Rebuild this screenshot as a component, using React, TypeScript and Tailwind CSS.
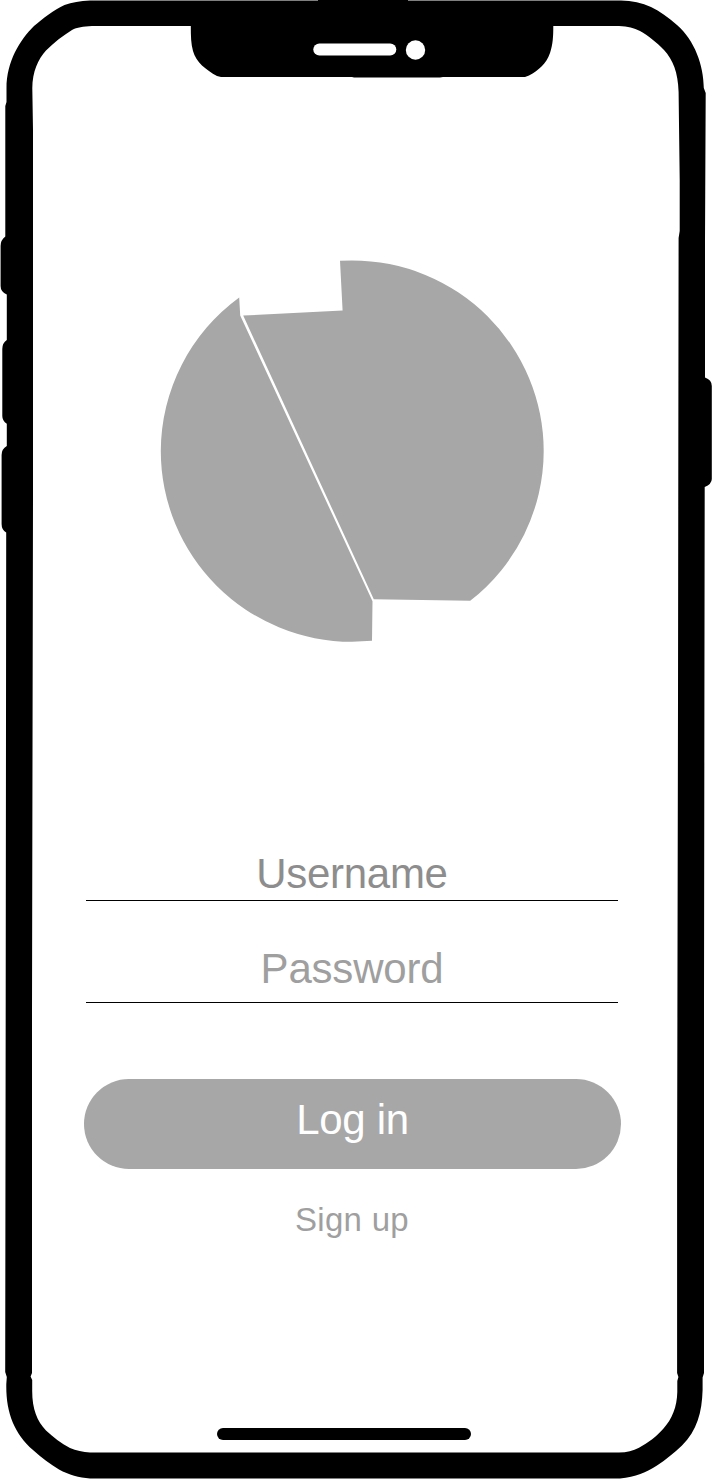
import React from "react";

function PhoneFrame() {
  return (
    <svg
      className="pointer-events-none absolute inset-0"
      width="712"
      height="1480"
      viewBox="0 0 712 1480"
      aria-hidden="true"
    >
      <path
        fillRule="evenodd"
        d="M90 .6C80 1 72 2.5 64.5 5C54 9.5 43 18.5 34 26C20 39.5 6.5 62 6.5 88V102L5.3 106V236.5Q.6 240 .6 246V286Q.6 292 6.8 294.5V340Q2.3 343 2.3 349V416Q2.3 421 6.8 423.8V446Q1.6 449 1.6 455V524Q1.6 530 6.2 532.6L5.7 1000L5.2 1372L6.8 1377L6.3 1384C5.8 1412 14 1433 33 1450C42 1458 50 1464 59 1469.5C69 1475 79 1477.5 90 1478.6H620C636 1477 646 1472.5 657 1465.5C666 1459.5 674 1453 682 1445.5C697 1431 702 1412 702.6 1390V1377.5L704 1373V1000L704.7 487Q711.8 484 711.8 479V386Q711.8 380 705 377.6V240L705.7 93L703.8 88C703.5 65 695 41 677 25C668 17 660 11.5 651 7C642 3 632 1 621 .6Z
        M92 26H190.8C190.8 36 191 44 193 51C196 62 206 70 217 76L221 77H352L354 77.6H440L443 77H525L529 75.5C539 70 546 64 550 53C553 44 553.3 36 553.3 26H619C628 26.5 634 28 640 31C648 35.5 657 42.5 664 50C673 60 678 72 678.6 92L679.7 180V231L678.6 238L678 700L677.1 1170V1373L678.4 1377L677.3 1381V1392C677 1407 672 1419 663.5 1428.5C657 1436 648 1443 639 1447.7C633 1451 627 1452.3 619 1452.6H90C83 1452 76 1450.5 70 1448C61 1443.5 53 1437 46 1430.5C37 1421 32 1409 32.2 1390V1380L30.6 1376.5L32 1373V1010L33 500V130L32.3 88C32.5 72 38 59 46 50.5C54 42.5 63 35.5 72 30C77 27.5 83 26.3 92 26Z"
      />
      <path d="M318 0H408V2H318Z" />
      <rect x="313.3" y="43.4" width="83" height="12.2" rx="6.1" fill="white" />
      <circle cx="415.5" cy="50" r="9.7" fill="white" />
      <rect x="217" y="1428" width="254" height="12" rx="6" />
    </svg>
  );
}

function Logo() {
  return (
    <svg className="ml-4" width="384" height="384" viewBox="160 259 384 384" role="img" aria-label="Logo">
      <g fill="#a7a7a7">
        <path d="M340 260.8L352 260.4A191.7 190.8 0 0 1 543.7 451.2A191.7 190.8 0 0 1 470.2 600.8L373.8 599.2L243.2 315.6L342.6 310.4Z" />
        <path d="M239.2 297.5A191.2 190.8 0 0 0 160.8 451A191.2 190.8 0 0 0 352 641.8L372 640.7L372.5 601.2L240.2 315.4Z" />
      </g>
    </svg>
  );
}

export default function App() {
  return (
    <main className="relative h-[1480px] w-[712px] overflow-hidden bg-white font-['Liberation_Sans',Arial,sans-serif]">
      <PhoneFrame />
      <div className="flex h-full flex-col pl-36 pt-[259px]">
        <Logo />
        <form
          className="-ml-[60px] mt-[206px] flex w-[537px] flex-col text-[42px] leading-[48px]"
          onSubmit={(event) => event.preventDefault()}
        >
          <input
            aria-label="Username"
            placeholder="Username"
            className="ml-0.5 h-[52px] w-[532px] border-b border-black bg-transparent pb-px text-center leading-[48px] tracking-[-0.3px] outline-none placeholder:text-[#8d8d8d]"
          />
          <input
            aria-label="Password"
            placeholder="Password"
            type="password"
            className="ml-0.5 mt-[43px] h-[59px] w-[532px] border-b border-black bg-transparent pb-2 text-center leading-[48px] tracking-[-0.2px] outline-none placeholder:text-[#9f9f9f]"
          />
          <button
            type="submit"
            className="mt-[76px] h-[90px] w-[537px] rounded-[45px] bg-[#a7a7a7] pb-2 text-center tracking-[-0.3px] text-white"
          >
            Log in
          </button>
          <button
            type="button"
            className="mr-px mt-8 self-center text-[33px] leading-[38px] tracking-[0.3px] text-[#9f9f9f]"
          >
            Sign up
          </button>
        </form>
      </div>
    </main>
  );
}
